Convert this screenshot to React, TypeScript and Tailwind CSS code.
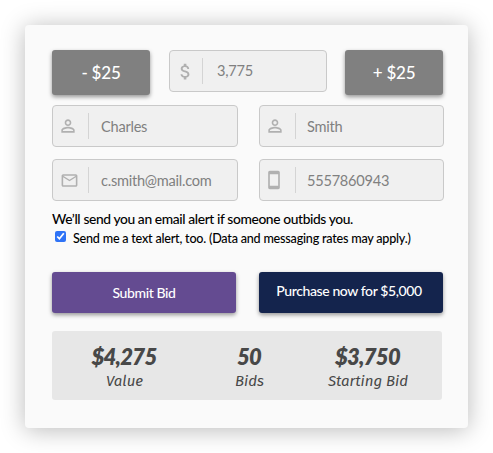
import React, { useState } from 'react';
import { MdAttachMoney, MdMailOutline, MdPersonOutline, MdStayCurrentPortrait } from 'react-icons/md';
import clsx from 'clsx';

interface FieldProps {
  icon: React.ReactNode;
  label: string;
  value: string;
  onChange: (value: string) => void;
  className?: string;
  iconClass?: string;
  inputClass?: string;
}

function Field({ icon, label, value, onChange, className, iconClass = 'w-[35px] pr-[5px]', inputClass = 'ml-3 pt-px' }: FieldProps) {
  return (
    <label className={clsx('flex h-[42px] items-center rounded border border-[#c9c9c9] bg-[#f0f0f0] text-[#b0b0b0]', className)}>
      <span className={clsx('flex shrink-0 justify-center', iconClass)}>{icon}</span>
      <span className="h-[26px] w-px shrink-0 bg-[#d4d4d4]" />
      <input
        aria-label={label}
        value={value}
        onChange={(e) => onChange(e.target.value)}
        className={clsx('min-w-0 flex-1 bg-transparent text-[14.6px] tracking-[-0.25px] text-[#808080] outline-none', inputClass)}
      />
    </label>
  );
}

function Stat({ value, label, className }: { value: string; label: string; className?: string }) {
  return (
    <div className={clsx('text-center text-[#484848] italic', className)}>
      <p className="pr-[1px] text-[22px] leading-[24px] font-extrabold tracking-[-0.7px]">{value}</p>
      <p className="font-['Fira_Sans','Open_Sans',sans-serif] text-[15px] leading-[24px] font-normal">{label}</p>
    </div>
  );
}

const stepButton = 'h-[45px] w-[98px] rounded-[3px] bg-[#808080] text-[17px] font-medium tracking-[-0.2px] text-white shadow-[0_2px_4px_rgba(0,0,0,0.4)]';
const actionButton = 'h-[41px] w-[184px] rounded-[3px] text-[14px] font-medium tracking-[-0.4px] text-white shadow-[0_2px_4px_rgba(0,0,0,0.4)]';

export default function App() {
  const [bid, setBid] = useState(3775);
  const [firstName, setFirstName] = useState('Charles');
  const [lastName, setLastName] = useState('Smith');
  const [email, setEmail] = useState('c.smith@mail.com');
  const [phone, setPhone] = useState('5557860943');
  const [textAlert, setTextAlert] = useState(true);

  const handleBid = (value: string) => setBid(Number(value.replace(/\D/g, '')));

  return (
    <div className="h-[453px] w-[493px] overflow-hidden bg-white p-[25px] font-['Lato',sans-serif]">
      <form
        onSubmit={(e) => e.preventDefault()}
        className="h-[403px] w-[443px] rounded-[4px] bg-[#fafafa] pt-[25px] pr-[24px] pl-[27px] shadow-[0_2px_24px_rgba(0,0,0,0.28)]"
      >
        <div className="flex items-start">
          <button type="button" className={stepButton} onClick={() => setBid(bid - 25)}>- $25</button>
          <Field
            icon={<MdAttachMoney size={21} />}
            label="Bid"
            value={bid.toLocaleString('en-US')}
            onChange={handleBid}
            className="mr-[18px] ml-[19px] w-[158px]"
            iconClass="w-[32px] pr-[1px]"
            inputClass="ml-[14px]"
          />
          <button type="button" className={stepButton} onClick={() => setBid(bid + 25)}>+ $25</button>
        </div>

        <div className="mt-[10px] grid grid-cols-[186px_185px] gap-x-[21px] gap-y-[12px]">
          <Field icon={<MdPersonOutline size={20} />} label="First name" value={firstName} onChange={setFirstName} />
          <Field icon={<MdPersonOutline size={20} />} label="Last name" value={lastName} onChange={setLastName} iconClass="w-[35px] pr-[6px]" inputClass="ml-[11px] pt-px" />
          <Field icon={<MdMailOutline size={19} />} label="Email" value={email} onChange={setEmail} iconClass="w-[35px] pr-[2px]" />
          <Field icon={<MdStayCurrentPortrait size={20} />} label="Phone" value={phone} onChange={setPhone} iconClass="w-[35px] pr-[7px]" inputClass="ml-[11px] pt-px" />
        </div>

        <p className="mt-[8px] text-[13.8px] leading-[20px] font-medium tracking-[-0.38px] whitespace-nowrap text-black">
          We’ll send you an email alert if someone outbids you.
        </p>
        <label className="mt-[2px] flex h-[17px] items-start text-[12.6px] leading-[16px] font-medium tracking-[-0.22px] whitespace-nowrap text-black">
          <input
            type="checkbox"
            checked={textAlert}
            onChange={(e) => setTextAlert(e.target.checked)}
            className="mr-[7px] ml-[3px] size-[11px] shrink-0 accent-[#2f73f6]"
          />
          Send me a text alert, too. (Data and messaging rates may apply.)
        </label>

        <div className="mt-[24px] flex gap-[23px]">
          <button type="submit" className={clsx(actionButton, 'bg-[#644b91]')}>Submit Bid</button>
          <button type="button" className={clsx(actionButton, 'bg-[#14244d] pr-[4px] pb-[4px]')}>Purchase now for $5,000</button>
        </div>

        <div className="mt-[18px] flex h-[69px] w-[390px] rounded-[3px] bg-[#e7e7e7] pt-[14px]">
          <Stat value="$4,275" label="Value" className="w-[145px]" />
          <Stat value="50" label="Bids" className="w-[105px]" />
          <Stat value="$3,750" label="Starting Bid" className="w-[132px]" />
        </div>
      </form>
    </div>
  );
}
